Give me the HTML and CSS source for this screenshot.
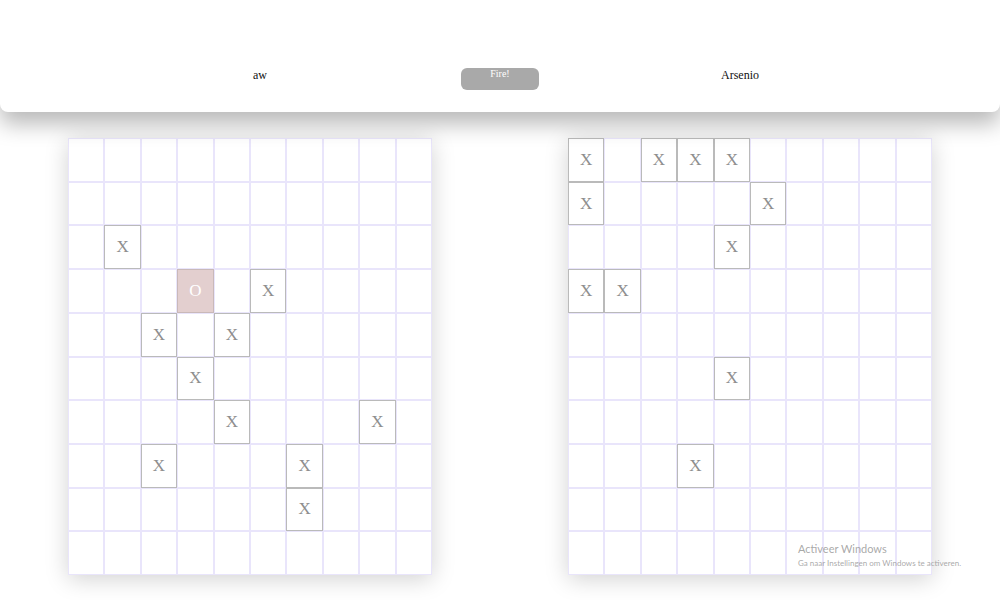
FILE: index.html
```html
<!DOCTYPE html>
<html>
<head>
<meta charset="utf-8">
<link rel="stylesheet" href="styles.css">
</head>
<body>
<header class="topbar">
  <div class="slot"><span class="player">aw</span></div>
  <div class="slot"><button class="fire">Fire!</button></div>
  <div class="slot"><span class="player">Arsenio</span></div>
</header>
<main class="boards">
  <div class="col"><div class="board" id="b1"></div></div>
  <div class="col"><div class="board" id="b2"></div></div>
</main>
<div class="watermark">
  <div class="wm-title">Activeer Windows</div>
  <div class="wm-sub">Ga naar Instellingen om Windows te activeren.</div>
</div>
<script src="script.js"></script>
</body>
</html>
```

FILE: styles.css
```css
html, body {
  margin: 0;
  padding: 0;
  background: #fff;
  width: 1000px;
  height: 600px;
  overflow: hidden;
  font-family: "Liberation Serif", "Times New Roman", serif;
}
.topbar {
  height: 112px;
  background: #fff;
  border-radius: 0 0 8px 8px;
  box-shadow: 0 12px 22px rgba(0, 0, 0, 0.28);
  display: grid;
  grid-template-columns: repeat(3, 240px);
  justify-content: center;
  align-items: start;
  position: relative;
  z-index: 2;
}
.slot {
  display: flex;
  justify-content: center;
  padding-top: 68px;
}
.player {
  font-size: 12px;
  line-height: 14px;
  color: #111;
}
.fire {
  width: 78px;
  height: 22px;
  border: none;
  border-radius: 6px;
  background: #a9a9a9;
  color: #fff;
  font-family: "Liberation Serif", "Times New Roman", serif;
  font-size: 10px;
  line-height: 12px;
  padding: 0;
  display: flex;
  justify-content: center;
  align-items: flex-start;
}
.boards {
  display: grid;
  grid-template-columns: 500px 500px;
  padding-top: 26px;
}
.col {
  display: flex;
  justify-content: center;
}
.board {
  width: 364px;
  height: 437px;
  display: grid;
  grid-template-columns: repeat(10, 1fr);
  grid-template-rows: repeat(10, 1fr);
  background: #fff;
  box-shadow: 0 4px 22px rgba(0, 0, 0, 0.18);
}
.cell {
  border: 1px solid #e9e5fb;
  display: flex;
  align-items: center;
  justify-content: center;
  font-size: 17px;
  color: #8e8e8e;
}
.cell.hit {
  border-color: #bababa;
}
.cell.own {
  background: #e3cfcf;
  border-color: #c9b9b9;
  color: #fff;
}
.watermark {
  position: absolute;
  left: 798px;
  top: 541px;
  font-family: Lato, "Open Sans", sans-serif;
  color: rgba(140, 140, 140, 0.75);
  z-index: 5;
}
.wm-title {
  font-size: 11px;
  line-height: 16px;
}
.wm-sub {
  font-size: 8px;
  line-height: 12px;
}
```

FILE: script.js
```js
const left = {
  "2,1": "X", "3,3": "O", "3,5": "X", "4,2": "X", "4,4": "X",
  "5,3": "X", "6,4": "X", "6,8": "X", "7,2": "X", "7,6": "X", "8,6": "X"
};
const right = {
  "0,0": "X", "0,2": "X", "0,3": "X", "0,4": "X", "1,0": "X", "1,5": "X",
  "2,4": "X", "3,0": "X", "3,1": "X", "5,4": "X", "7,3": "X"
};
function build(id, marks) {
  const b = document.getElementById(id);
  for (let r = 0; r < 10; r++) {
    for (let c = 0; c < 10; c++) {
      const d = document.createElement("div");
      d.className = "cell";
      const m = marks[r + "," + c];
      if (m) {
        d.textContent = m;
        d.classList.add(m === "O" ? "own" : "hit");
      }
      b.appendChild(d);
    }
  }
}
build("b1", left);
build("b2", right);
```
